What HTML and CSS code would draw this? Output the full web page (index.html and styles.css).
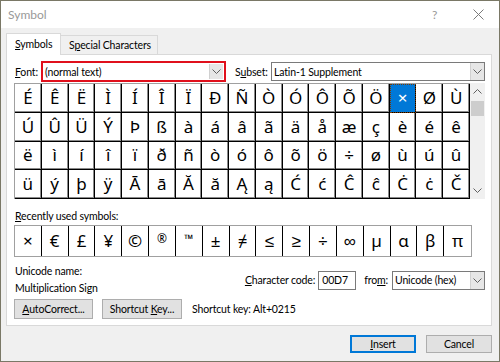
FILE: index.html
```html
<!DOCTYPE html>
<html>
<head>
<meta charset="utf-8">
<link rel="stylesheet" href="styles.css">
</head>
<body>
<div class="win">
  <div class="titlebar">
    <span class="title">Symbol</span>
    <span class="help">?</span>
    <svg class="close" width="11" height="11" viewBox="0 0 11 11"><path d="M0.5 0.5L10.5 10.5M10.5 0.5L0.5 10.5" stroke="#7a7a7a" stroke-width="1" fill="none"/></svg>
  </div>
  <div class="content">
    <div class="tabs">
      <div class="tab active"><span><u>S</u>ymbols</span></div>
      <div class="tab"><span>S<u>p</u>ecial Characters</span></div>
    </div>
    <div class="panel">
      <div class="font-row">
        <span class="lbl lbl-font"><u>F</u>ont:</span>
        <div class="combo combo-font">
          <span class="combo-text">(normal text)</span>
          <span class="drop"><svg width="9" height="5" viewBox="0 0 9 5"><path d="M0.5 0.5L4.5 4.5L8.5 0.5" stroke="#606060" fill="none"/></svg></span>
        </div>
        <span class="lbl lbl-subset">S<u>u</u>bset:</span>
        <div class="combo combo-subset">
          <span class="combo-text">Latin-1 Supplement</span>
          <span class="drop"><svg width="9" height="5" viewBox="0 0 9 5"><path d="M0.5 0.5L4.5 4.5L8.5 0.5" stroke="#606060" fill="none"/></svg></span>
        </div>
      </div>
      <div class="grid-row">
        <div class="grid">
          <span class="cell">É</span><span class="cell">Ê</span><span class="cell">Ë</span><span class="cell">Ì</span><span class="cell">Í</span><span class="cell">Î</span><span class="cell">Ï</span><span class="cell">Ð</span><span class="cell">Ñ</span><span class="cell">Ò</span><span class="cell">Ó</span><span class="cell">Ô</span><span class="cell">Õ</span><span class="cell">Ö</span><span class="cell sel">×</span><span class="cell">Ø</span><span class="cell">Ù</span>
          <span class="cell">Ú</span><span class="cell">Û</span><span class="cell">Ü</span><span class="cell">Ý</span><span class="cell">Þ</span><span class="cell">ß</span><span class="cell">à</span><span class="cell">á</span><span class="cell">â</span><span class="cell">ã</span><span class="cell">ä</span><span class="cell">å</span><span class="cell">æ</span><span class="cell">ç</span><span class="cell">è</span><span class="cell">é</span><span class="cell">ê</span>
          <span class="cell">ë</span><span class="cell">ì</span><span class="cell">í</span><span class="cell">î</span><span class="cell">ï</span><span class="cell">ð</span><span class="cell">ñ</span><span class="cell">ò</span><span class="cell">ó</span><span class="cell">ô</span><span class="cell">õ</span><span class="cell">ö</span><span class="cell">÷</span><span class="cell">ø</span><span class="cell">ù</span><span class="cell">ú</span><span class="cell">û</span>
          <span class="cell">ü</span><span class="cell">ý</span><span class="cell">þ</span><span class="cell">ÿ</span><span class="cell">Ā</span><span class="cell">ā</span><span class="cell">Ă</span><span class="cell">ă</span><span class="cell">Ą</span><span class="cell">ą</span><span class="cell">Ć</span><span class="cell">ć</span><span class="cell">Ĉ</span><span class="cell">ĉ</span><span class="cell">Ċ</span><span class="cell">ċ</span><span class="cell">Č</span>
        </div>
        <div class="scroll">
          <span class="sarrow"><svg width="9" height="5" viewBox="0 0 9 5"><path d="M0.5 4.5L4.5 0.5L8.5 4.5" stroke="#606060" fill="none"/></svg></span>
          <span class="thumb"></span>
          <span class="strack"></span>
          <span class="sarrow"><svg width="9" height="5" viewBox="0 0 9 5"><path d="M0.5 0.5L4.5 4.5L8.5 0.5" stroke="#606060" fill="none"/></svg></span>
        </div>
      </div>
      <div class="recent-label"><u>R</u>ecently used symbols:</div>
      <div class="recent">
        <span class="rcell">×</span><span class="rcell">€</span><span class="rcell">£</span><span class="rcell">¥</span><span class="rcell">©</span><span class="rcell small">®</span><span class="rcell small">™</span><span class="rcell">±</span><span class="rcell">≠</span><span class="rcell">≤</span><span class="rcell">≥</span><span class="rcell">÷</span><span class="rcell">∞</span><span class="rcell">µ</span><span class="rcell">α</span><span class="rcell">β</span><span class="rcell">π</span>
      </div>
      <div class="info">
        <div class="uname">
          <div>Unicode name:</div>
          <div>Multiplication Sign</div>
        </div>
        <div class="code">
          <span class="lbl"><u>C</u>haracter code:</span>
          <span class="input">00D7</span>
          <span class="lbl lbl-from">fro<u>m</u>:</span>
          <div class="combo combo-from">
            <span class="combo-text">Unicode (hex)</span>
            <span class="drop"><svg width="9" height="5" viewBox="0 0 9 5"><path d="M0.5 0.5L4.5 4.5L8.5 0.5" stroke="#606060" fill="none"/></svg></span>
          </div>
        </div>
      </div>
      <div class="btn-row">
        <span class="btn btn-auto"><span><u>A</u>utoCorrect...</span></span>
        <span class="btn btn-key"><span>Shortcut <u>K</u>ey...</span></span>
        <span class="shortcut">Shortcut key: Alt+0215</span>
      </div>
    </div>
    <div class="footer">
      <span class="btn btn-main btn-default"><span><u>I</u>nsert</span></span>
      <span class="btn btn-main"><span>Cancel</span></span>
    </div>
  </div>
</div>
</body>
</html>
```

FILE: styles.css
```css
* { box-sizing: border-box; }
html, body { margin: 0; padding: 0; }
body {
  width: 500px;
  height: 362px;
  overflow: hidden;
  font-family: Lato, "Noto Sans", sans-serif;
  font-size: 10.5px;
  letter-spacing: -0.15px;
  color: #000;
  background: #fff;
}
u { text-decoration: underline; text-underline-offset: 1px; }

.win {
  width: 500px;
  height: 362px;
  border: 1px solid #7a7866;
  background: #f0f0f0;
  display: flex;
  flex-direction: column;
}

.titlebar {
  height: 27px;
  background: #fff;
  display: flex;
  align-items: center;
  padding-left: 7px;
}
.title { color: #999; font-size: 12px; letter-spacing: 0; flex: 1; }
.help { color: #999; font-size: 12px; width: 40px; margin-right: 1px; }
.close { margin-right: 15px; }

.content {
  flex: 1;
  padding: 5px 7px 0 5px;
}

.tabs {
  display: flex;
  align-items: flex-end;
  height: 21px;
  position: relative;
  z-index: 1;
}
.tab {
  height: 19px;
  border: 1px solid #d9d9d9;
  border-bottom: none;
  background: #f0f0f0;
  display: flex;
  align-items: center;
  white-space: nowrap;
  margin-left: -1px;
  padding-left: 8px;
}
.tab.active {
  height: 22px;
  width: 55px;
  background: #fff;
  margin-left: 0;
  margin-bottom: -1px;
  padding-left: 8px;
  padding-bottom: 1px;
}
.tab:not(.active) { width: 98px; }

.panel {
  width: 486px;
  height: 272px;
  background: #fff;
  border: 1px solid #d9d9d9;
  padding: 6px 5px 0 7px;
}

.font-row {
  display: flex;
  align-items: center;
  height: 21px;
}
.lbl { white-space: nowrap; }
.lbl-font { width: 27px; padding-left: 1px; }
.lbl-subset { width: 36px; margin-left: 9px; }

.combo {
  display: flex;
  align-items: center;
  background: #fff;
  border: 1px solid #7a7a7a;
}
.combo-text { flex: 1; padding-left: 2px; white-space: nowrap; }
.drop {
  width: 14px;
  align-self: stretch;
  display: flex;
  align-items: center;
  justify-content: center;
  background: #e6e6e6;
  border-left: 1px solid #d0d0d0;
}
.combo-font {
  width: 185px;
  height: 21px;
  border: 2px solid #e0101c;
  padding: 0 1px 0 0;
}
.combo-font .drop { margin: 1px 0; }
.combo-subset { width: 214px; height: 19px; }

.grid-row {
  display: flex;
  margin-top: 1px;
  height: 116px;
}
.grid {
  width: 456px;
  height: 116px;
  display: grid;
  grid-template-columns: repeat(17, 1fr);
  grid-template-rows: repeat(4, 1fr);
  border-top: 1px solid #a0a0a0;
  border-left: 1px solid #a0a0a0;
}
.cell {
  display: flex;
  align-items: center;
  justify-content: center;
  font-family: "Noto Sans", sans-serif;
  font-size: 17px;
  letter-spacing: 0;
  border-right: 1px solid #000;
  border-bottom: 1px solid #000;
  box-shadow: inset -1px -1px 0 #8a8a8a;
  padding-bottom: 1px;
}
.cell.sel {
  background: #0078d7;
  color: #fff;
  outline: 1px dotted #7a3a00;
  outline-offset: -1px;
  box-shadow: none;
}

.scroll {
  width: 15px;
  background: #f0f0f0;
  display: flex;
  flex-direction: column;
}
.sarrow {
  height: 17px;
  display: flex;
  align-items: center;
  justify-content: center;
}
.thumb {
  height: 15px;
  margin: 1px 1px 0;
  background: #cdcdcd;
}
.strack { flex: 1; }

.recent-label {
  margin-top: 10px;
  height: 15px;
  line-height: 15px;
  padding-left: 1px;
}
.recent {
  margin-top: 1px;
  width: 458px;
  height: 32px;
  display: grid;
  grid-template-columns: repeat(17, 1fr);
  border: 1px solid #a0a0a0;
}
.rcell {
  display: flex;
  align-items: center;
  justify-content: center;
  font-family: "Noto Sans", sans-serif;
  font-size: 17px;
  letter-spacing: 0;
  border-right: 1px solid #000;
  padding-bottom: 1px;
}
.rcell:last-child { border-right: none; }
.rcell.small { font-size: 12px; align-items: flex-start; padding-top: 4px; }

.info {
  margin-top: 6px;
  display: flex;
  align-items: center;
  justify-content: space-between;
  padding-right: 1px;
}
.uname { line-height: 17px; padding-left: 1px; }
.code { display: flex; align-items: center; }
.input {
  width: 38px;
  height: 19px;
  border: 1px solid #7a7a7a;
  background: #fff;
  padding-left: 3px;
  line-height: 17px;
  margin-left: 3px;
}
.lbl-from { margin-left: 8px; }
.combo-from { width: 93px; height: 19px; margin-left: 4px; }

.btn-row {
  display: flex;
  align-items: center;
  margin-top: 2px;
}
.btn {
  height: 20px;
  display: flex;
  align-items: center;
  justify-content: center;
  background: #e1e1e1;
  border: 1px solid #adadad;
  white-space: nowrap;
}
.btn-auto { width: 79px; }
.btn-key { width: 80px; margin-left: 9px; }
.shortcut { margin-left: 10px; }

.footer {
  display: flex;
  justify-content: flex-end;
  gap: 10px;
  margin-top: 9px;
}
.btn-main { width: 66px; height: 18px; }
.btn-default { border: 1px solid #0078d7; box-shadow: inset 0 0 0 1px #0078d7; }
```
